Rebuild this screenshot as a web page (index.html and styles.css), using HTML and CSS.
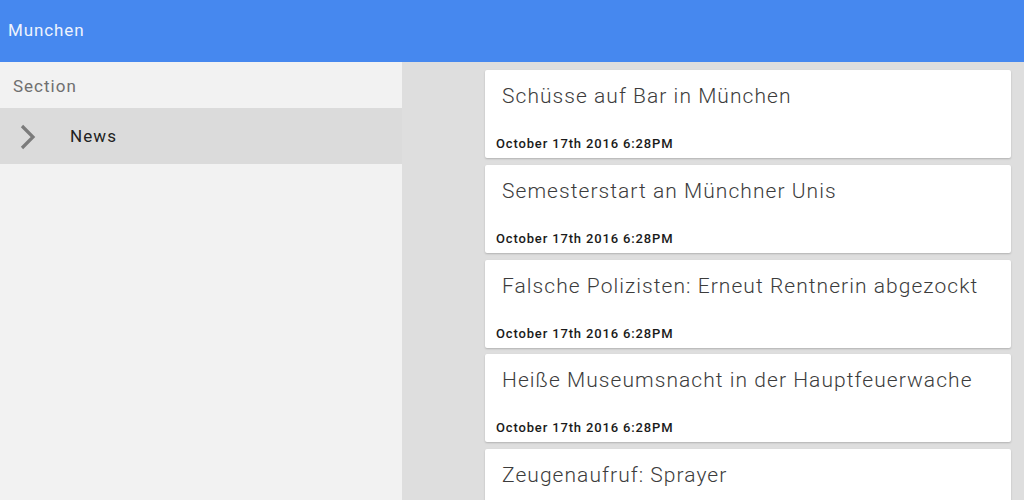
FILE: index.html
```html
<!DOCTYPE html>
<html>
<head>
<meta charset="utf-8">
<link rel="stylesheet" href="styles.css">
</head>
<body>
<header class="appbar">Munchen</header>
<div class="main">
  <aside class="sidebar">
    <div class="section-label">Section</div>
    <div class="nav-item">
      <svg class="chev" width="18" height="26" viewBox="0 0 18 26"><path d="M3 2 L14 13 L3 24" fill="none" stroke="#7b7b7b" stroke-width="3.2"/></svg>
      <span class="nav-text">News</span>
    </div>
  </aside>
  <section class="content">
    <div class="list">
      <div class="card"><div class="title">Schüsse auf Bar in München</div><div class="date">October 17th 2016 6:28PM</div></div>
      <div class="card"><div class="title">Semesterstart an Münchner Unis</div><div class="date">October 17th 2016 6:28PM</div></div>
      <div class="card"><div class="title">Falsche Polizisten: Erneut Rentnerin abgezockt</div><div class="date">October 17th 2016 6:28PM</div></div>
      <div class="card"><div class="title">Heiße Museumsnacht in der Hauptfeuerwache</div><div class="date">October 17th 2016 6:28PM</div></div>
      <div class="card"><div class="title">Zeugenaufruf: Sprayer</div><div class="date">October 17th 2016 6:28PM</div></div>
    </div>
  </section>
</div>
</body>
</html>
```
FILE: styles.css
```css
* { box-sizing: border-box; }
html, body { margin: 0; padding: 0; height: 100%; overflow: hidden; }
body { font-family: Roboto, "Noto Sans", sans-serif; background: #dedede; }
.appbar {
  height: 62px;
  background: #4688ef;
  color: #eef3fd;
  font-size: 17px;
  letter-spacing: 0.9px;
  line-height: 60px;
  padding-left: 8px;
}
.main { display: flex; height: 438px; overflow: hidden; }
.sidebar { width: 402px; background: #f2f2f2; flex: none; }
.section-label {
  height: 46px;
  line-height: 48px;
  padding-left: 13px;
  font-size: 17px;
  letter-spacing: 1px;
  color: #6f6f6f;
}
.nav-item {
  height: 56px;
  background: #dbdbdb;
  display: flex;
  align-items: center;
}
.chev { margin-left: 19px; margin-top: 2px; }
.nav-text { margin-left: 33px; font-size: 17px; letter-spacing: 1.1px; color: #222; }
.content { flex: 1; background: #dedede; padding: 8px 13px 0 83px; overflow: hidden; }
.list { display: flex; flex-direction: column; gap: 6.75px; }
.card {
  background: #fff;
  height: 88px;
  border-radius: 2px;
  box-shadow: 0 1px 2px rgba(0,0,0,0.2);
  flex: none;
  position: relative;
}
.title {
  font-weight: 300;
  font-size: 21px;
  letter-spacing: 1.05px;
  color: #3c3c3c;
  padding: 13px 0 0 17px;
  line-height: 26px;
  white-space: nowrap;
}
.date {
  position: absolute;
  left: 11px;
  top: 66px;
  font-size: 13px;
  letter-spacing: 0.85px;
  font-weight: 500;
  color: #1a1a1a;
}
```
